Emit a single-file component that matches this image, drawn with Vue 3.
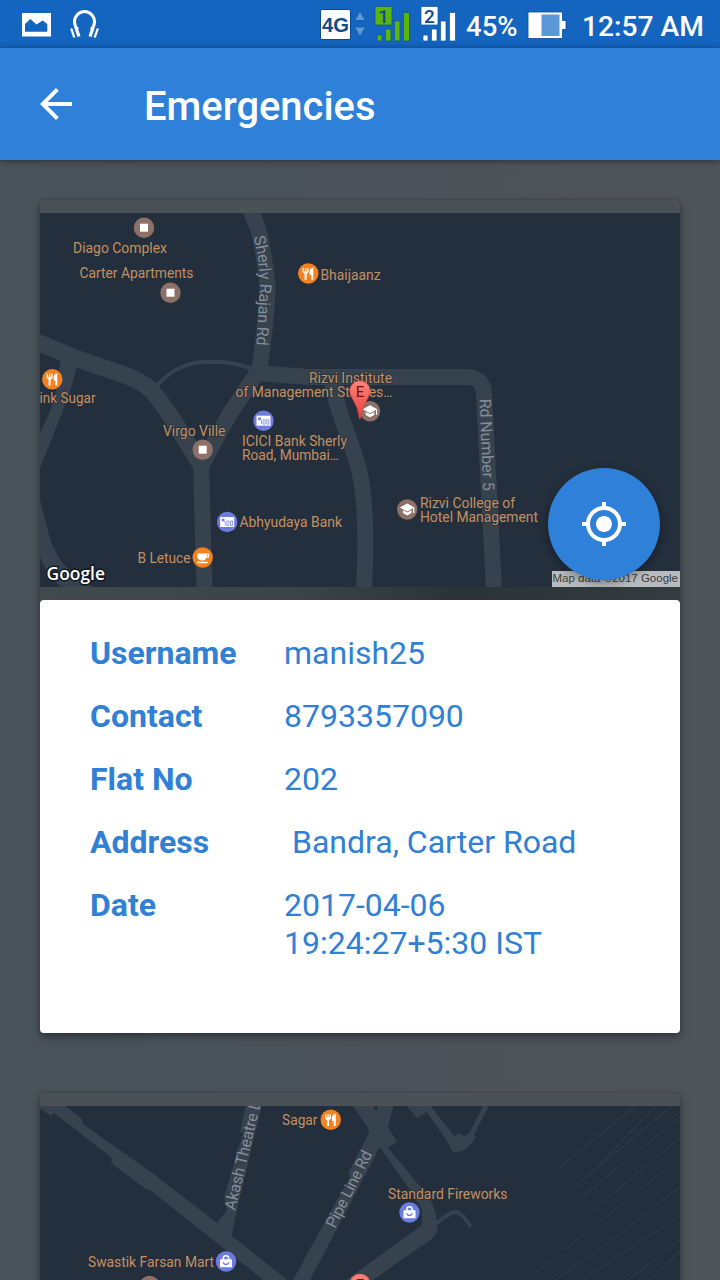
<script setup>
const details = [
  { label: 'Username', value: 'manish25' },
  { label: 'Contact', value: '8793357090' },
  { label: 'Flat No', value: '202' },
  { label: 'Address', value: ' Bandra, Carter Road' },
  { label: 'Date', value: '2017-04-06\n19:24:27+5:30 IST' },
]

const maps = [
  {
    id: 'first',
    viewBox: '40 213 640 374',
    pinY: 0,
    roads: [
      { d: 'M30 339L78 359C110 371 138 376 152 391C166 407 181 432 202 467', w: 17 },
      { d: 'M201 462L204.500 590', w: 16 },
      { d: 'M202 465L229 415L259 370', w: 16 },
      { d: 'M154 389C166 374 184 362 205 362H222C236 363 246 367 256 370', w: 4 },
      { d: 'M246 200L258 228Q264 250 267.500 287Q267 320 259 372', w: 16 },
      { d: 'M255 373L310 377H466Q483 377 484 393L494 590', w: 16 },
      { d: 'M332 380C336 415 360 455 363 493Q367 530 364 590', w: 16 },
    ],
    shapes: [
      'M61 358L77 366L71 388Q67 401 40 468V433Q53 408 56 390Z',
      'M40 500C46 522 49 540 55 550Q60 567 93 587H62Q50 580 40 557Z',
    ],
    rails: [],
    labels: [
      { t: 'Diago Complex', x: 73, y: 252.5, w: 94 },
      { t: 'Carter Apartments', x: 79.500, y: 278, w: 114 },
      { t: 'Bhaijaanz', x: 320.500, y: 279.5, w: 60 },
      { t: 'Rizvi Institute', x: 309, y: 382.5, w: 83 },
      { t: 'of Management Studies…', x: 235.500, y: 396.5, w: 157 },
      { t: 'ink Sugar', x: 39.500, y: 402.5, w: 56 },
      { t: 'Virgo Ville', x: 163, y: 436, w: 62.5 },
      { t: 'ICICI Bank Sherly', x: 242, y: 445.5, w: 105 },
      { t: 'Road, Mumbai…', x: 242, y: 459.5, w: 97 },
      { t: 'Abhyudaya Bank', x: 239.500, y: 526.5, w: 102.5 },
      { t: 'Rizvi College of', x: 420, y: 507.5, w: 95 },
      { t: 'Hotel Management', x: 420, y: 521.5, w: 118 },
      { t: 'B Letuce', x: 137.500, y: 562.7, w: 53 },
    ],
    streets: [
      { t: 'Sherly Rajan Rd', d: 'M253.500 237Q260 262 260 286L255.500 360', w: 109 },
      { t: 'Rd Number 5', d: 'M479.500 399L483.500 500', w: 92 },
    ],
    places: [
      { k: 'square', x: 144, y: 227.700 },
      { k: 'square', x: 170.5, y: 292.7 },
      { k: 'square', x: 202.7, y: 449.7 },
      { k: 'food', x: 308.3, y: 273.5 },
      { k: 'food', x: 52.3, y: 379.2 },
      { k: 'cafe', x: 202.7, y: 557.5 },
      { k: 'bank', x: 263.5, y: 420.7 },
      { k: 'bank', x: 227.2, y: 522 },
      { k: 'school', x: 370, y: 411.3 },
      { k: 'school', x: 407.2, y: 509.5 },
    ],
    credit: true,
  },
  {
    id: 'second',
    viewBox: '40 1106 640 374',
    pinY: 893,
    roads: [
      { d: 'M435 1225Q450 1211 456 1212Q461 1212 471 1227', w: 4 },
      { d: 'M470 1137L487 1104', w: 5 },
    ],
    shapes: [
      'M40 1104H63L82 1119L83 1124L155 1175L217 1223L232 1236L290 1282H266L150 1190L147 1190L111 1163L112 1158L54 1113L51 1116L40 1108Z',
      'M246 1104H262L237 1210L231 1238L215 1226L227 1210L224 1197L243 1133L240 1132Z',
      'M353 1104H372L376 1111L379 1104H394L388 1127L397 1142L387 1148L380 1147L310 1280H293L322 1227L350 1177L348 1173L369 1133L368 1128L353 1106Z',
      'M380 1147H387Q402 1164 417 1183Q439 1203 437 1232L433 1238L373 1280H346L422 1225V1210L410 1190Z',
      'M405 1104H429L455 1137L458 1133L464 1136L470 1133L476 1137Q468 1151 455 1153Q452 1152 447 1141L427 1112L417 1118Z',
    ],
    rails: [
      'M559 1168L638 1104', 'M574 1187L674 1104', 'M600 1164L657 1104',
      'M582 1197L680 1117', 'M593 1210L680 1138', 'M564 1250L680 1158',
      'M533 1275L554 1258', 'M556 1280L613 1239L680 1187', 'M583 1280L632 1247L680 1216',
      'M628 1280L680 1240', 'M650 1280L680 1251',
    ],
    labels: [
      { t: 'Sagar', x: 282, y: 1124.5, w: 35.5 },
      { t: 'Standard Fireworks', x: 388, y: 1199, w: 119.5 },
      { t: 'Swastik Farsan Mart', x: 88, y: 1267, w: 126 },
    ],
    streets: [
      { t: 'Akash Theatre Ln', d: 'M235 1211L263 1094', w: 120 },
      { t: 'Pipe Line Rd', d: 'M335 1229L376 1147', w: 84 },
    ],
    places: [
      { k: 'food', x: 330.7, y: 1119.7 },
      { k: 'shop', x: 409.5, y: 1212.5 },
      { k: 'shop', x: 226, y: 1261.5 },
      { k: 'square', x: 149.5, y: 1286 },
    ],
    credit: false,
  },
]
</script>

<template>
  <div class="screen">
    <div class="status">
      <svg class="notes" width="110" height="48" viewBox="0 0 110 48">
        <path fill="#fff" fill-rule="evenodd" d="M22 13H51V36.500H22ZM25 24V31.700H47.300V24L42.700 20.500L36.500 24.500L30.300 19Z" />
        <g fill="none" stroke="#fff">
          <path stroke-width="3" d="M78 29.500A10 10.200 0 1 1 91 29.500" />
          <path stroke-width="2.300" d="M71.200 28.500L74.300 37.500M97.800 28.500L94.700 37.500" />
          <path stroke-width="3.200" d="M75.700 27L79 36.500M93.300 27L90 36.500" />
        </g>
      </svg>
      <svg class="signals" width="147" height="48" viewBox="320 0 147 48">
        <rect x="320.500" y="9.500" width="30" height="30" rx="1.500" fill="#fff" stroke="#0b4a94" />
        <text x="322" y="32" textLength="27" lengthAdjust="spacingAndGlyphs" class="net">4G</text>
        <path fill="#5d9ad9" stroke="#0b4f9f" stroke-width=".7" d="M360 11.500L365.500 20.500H354.500ZM360 36.500L365.500 27H354.500Z" />
        <g fill="#5cb50b" stroke="#0b4f9f" stroke-width=".7">
          <rect x="375" y="6.500" width="17" height="18.500" rx="1" />
          <rect x="377" y="35" width="5" height="6" rx="1" />
          <rect x="385.500" y="29" width="5.500" height="12" rx="1" />
          <rect x="394.500" y="21" width="5.500" height="20" rx="1" />
          <rect x="403.500" y="12.500" width="6" height="28.500" rx="1" />
        </g>
        <g fill="#fff" stroke="#0b4f9f" stroke-width=".7">
          <rect x="421" y="6.500" width="17" height="18.500" rx="1" />
          <rect x="423" y="35" width="5" height="6" rx="1" />
          <rect x="431.500" y="29" width="5.500" height="12" rx="1" />
          <rect x="440.500" y="21" width="5.500" height="20" rx="1" />
          <rect x="449.500" y="12.500" width="6" height="28.500" rx="1" />
        </g>
        <text x="383.500" y="22.500" class="sim">1</text>
        <text x="429.500" y="22.500" class="sim">2</text>
      </svg>
      <span class="pct">45%</span>
      <svg class="battery" width="40" height="48" viewBox="527 0 40 48">
        <path fill="#fff" stroke="#0b4a94" stroke-width=".8" d="M528 12H562.500V20.500H566V29.500H562.500V38.500H528Z" />
        <rect x="541.500" y="14.500" width="18" height="21.500" fill="#5c98d8" />
      </svg>
      <span class="clock">12:57 AM</span>
    </div>

    <header class="bar">
      <svg width="48" height="48" viewBox="0 0 24 24">
        <path fill="#fff" d="M20 11H7.830l5.590-5.590L12 4l-8 8 8 8 1.410-1.410L7.830 13H20v-2z" />
      </svg>
      <h1>Emergencies</h1>
    </header>

    <main class="list">
      <article v-for="m in maps" :key="m.id" class="card">
        <div class="media">
          <svg class="map" width="640" height="374" :viewBox="m.viewBox">
            <defs>
              <linearGradient :id="'pin-' + m.id" x1="0" y1="0" x2="0" y2="1">
                <stop offset="0" stop-color="#fb857d" />
                <stop offset="1" stop-color="#ee3a36" />
              </linearGradient>
              <path v-for="(s, i) in m.streets" :id="m.id + '-street-' + i" :key="s.t" :d="s.d" />
            </defs>
            <path v-for="r in m.rails" :key="r" :d="r" class="rail" />
            <path v-for="s in m.shapes" :key="s" :d="s" class="block" />
            <path v-for="r in m.roads" :key="r.d" :d="r.d" :stroke-width="r.w" class="road" />
            <text v-for="(s, i) in m.streets" :key="s.t" class="street" :textLength="s.w">
              <textPath :href="'#' + m.id + '-street-' + i" :textLength="s.w">{{ s.t }}</textPath>
            </text>
            <text v-for="l in m.labels" :key="l.t" :x="l.x" :y="l.y" :textLength="l.w" lengthAdjust="spacingAndGlyphs" class="label">{{ l.t }}</text>
            <g v-for="(p, i) in m.places" :key="i" :transform="`translate(${p.x} ${p.y})`">
              <circle r="10.200" :class="['dot', p.k]" />
              <rect v-if="p.k === 'square'" x="-4" y="-4" width="8" height="8" fill="#fff" />
              <g v-else-if="p.k === 'food'" fill="none" stroke="#fff">
                <path stroke-width="1.300" d="M-5 -5.500V-1.500M-2.700 -5.500V-1M-.400 -5.500V-1.500" />
                <path stroke-width="2" d="M-5 -2Q-2.700 1 -.400 -2M-2.700 -.500V6.200" />
                <path fill="#fff" stroke="none" d="M5 -6V6.200H3V1.200H1.300V-2.500Q1.800 -5.500 5 -6Z" />
              </g>
              <g v-else-if="p.k === 'cafe'">
                <path fill="#fff" d="M-5.500 -4H6.500V0H4Q2.500 3 0 3H-1.500Q-5 2.500 -5.500 -2ZM-5.500 4.300H5V5.800H-5.500Z" />
                <path fill="#f58220" d="M4.200 -2.800H5.400V-1.200H4.200Z" />
              </g>
              <g v-else-if="p.k === 'bank'">
                <rect x="-7" y="-5" width="14" height="10" fill="#fff" />
                <circle cx="-4" cy="-2" r="1.500" fill="#6c7be0" />
                <path fill="none" stroke="#8d99e6" stroke-width=".900" d="M-2 -1V3.500M-.300 -1H1.700V3.500H-.300ZM3.300 -1H5.300V3.500H3.300Z" />
              </g>
              <g v-else-if="p.k === 'school'" fill="#fff">
                <path d="M0 -6L7.300 -2L0 2L-7.300 -2ZM-4.300 .600L0 3L4.300 .600V3.600L0 6L-4.300 3.600ZM6 -1.500H7.200V3.500H6Z" />
              </g>
              <g v-else>
                <rect x="-6" y="-2.200" width="12" height="8" rx=".600" fill="#fff" />
                <path fill="none" stroke="#fff" stroke-width="1.500" d="M-2.700 -1.500V-3Q-2.700 -5.700 0 -5.700T2.700 -3V-1.500" />
                <path fill="none" stroke="#6c7be0" stroke-width="1.400" d="M-3 .800Q0 5.300 3 .800" />
              </g>
            </g>
            <g :transform="`translate(0 ${m.pinY})`">
              <path :fill="'url(#pin-' + m.id + ')'" stroke="#d84a45" stroke-width=".600" d="M360 381C354 381 349.800 385.500 349.800 391C349.800 398 358.500 404 359.200 418.500H360.800C361.500 404 370.200 398 370.200 391C370.200 385.500 366 381 360 381Z" />
              <text x="360" y="397" class="pin-letter">E</text>
            </g>
            <text v-if="m.credit" x="46.500" y="580" textLength="58.500" lengthAdjust="spacingAndGlyphs" class="google">Google</text>
          </svg>
          <span v-if="m.credit" class="credit">Map data ©2017 Google</span>
          <button class="fab" v-if="m.credit" aria-label="Locate">
            <svg width="48" height="48" viewBox="0 0 24 24">
              <path fill="#fff" d="M12 8c-2.210 0-4 1.790-4 4s1.790 4 4 4 4-1.790 4-4-1.790-4-4-4zm8.940 3c-.46-4.170-3.770-7.480-7.940-7.940V1h-2v2.060C6.830 3.520 3.520 6.830 3.060 11H1v2h2.060c.46 4.170 3.770 7.480 7.940 7.940V23h2v-2.060c4.170-.46 7.480-3.770 7.940-7.940H23v-2h-2.060zM12 19c-3.870 0-7-3.130-7-7s3.130-7 7-7 7 3.130 7 7-3.130 7-7 7z" />
            </svg>
          </button>
        </div>
        <dl class="details">
          <div v-for="d in details" :key="d.label" class="row">
            <dt>{{ d.label }}</dt>
            <dd>{{ d.value }}</dd>
          </div>
        </dl>
      </article>
    </main>
  </div>
</template>

<style>
body {
  margin: 0;
  overflow: hidden;
}
</style>

<style scoped>
.screen {
  width: 720px;
  height: 1280px;
  overflow: hidden;
  display: flex;
  flex-direction: column;
  font-family: Roboto, "Liberation Sans", sans-serif;
  background: linear-gradient(90deg, #49535a, #4c535a 55%, #4e555a);
}
.status {
  flex: none;
  height: 48px;
  display: grid;
  grid-template-columns: 320px 146px 61px 55px 1fr;
  background: #1465c0;
  color: #fff;
  font-weight: 500;
  font-size: 28px;
  line-height: 54px;
  white-space: nowrap;
}
.status svg {
  display: block;
}
.pct {
  font-size: 27.500px;
}
.clock {
  font-size: 28.200px;
}
.net {
  font: bold 20px "Liberation Sans", sans-serif;
  fill: #124a8c;
}
.sim {
  font: 500 19px Roboto, sans-serif;
  fill: #124a8c;
  text-anchor: middle;
}
.bar {
  flex: none;
  height: 112px;
  box-sizing: border-box;
  padding-left: 32px;
  display: flex;
  align-items: center;
  gap: 64px;
  background: #2f80d8;
  box-shadow: 0 1px 7px rgba(0, 0, 0, .45);
  position: relative;
}
.bar h1 {
  margin: 6px 0 0;
  font-size: 39.900px;
  font-weight: 500;
  line-height: 48px;
  color: #fff;
}
.list {
  display: flex;
  flex-direction: column;
  gap: 60px;
  padding: 40px;
}
.card {
  flex: none;
  height: 833px;
  border-radius: 4px;
  display: flex;
  flex-direction: column;
  background: linear-gradient(90deg, #404a4d, #3b4548 40%, #2a3337 65%, #343c3f) 0 387px / 100% 40px no-repeat, #4b5257;
  box-shadow: 0 4px 10px rgba(0, 0, 0, .36), 0 0 3px rgba(0, 0, 0, .2);
}
.media {
  flex: none;
  height: 374px;
  padding: 13px 0;
  position: relative;
}
.map {
  display: block;
  background: #232f3c;
}
.road {
  fill: none;
  stroke: #36424e;
  stroke-linejoin: round;
}
.block {
  fill: #36424e;
}
.rail {
  fill: none;
  stroke: #2d3946;
  stroke-width: 1.3;
}
.label {
  font-size: 14px;
  fill: #c68f62;
  stroke: #232f3c;
  stroke-width: 1.5px;
  paint-order: stroke;
}
.street {
  font-size: 16px;
  fill: #858d98;
}
.dot.square, .dot.school {
  fill: #8d7066;
}
.dot.food, .dot.cafe {
  fill: #f58220;
}
.dot.bank, .dot.shop {
  fill: #6c7be0;
}
.pin-letter {
  font-size: 15px;
  fill: #6f1512;
  text-anchor: middle;
}
.google {
  font: 600 18.500px "Open Sans", Lato, sans-serif;
  fill: #fff;
  stroke: #111820;
  stroke-width: 3px;
  stroke-linejoin: round;
  paint-order: stroke;
}
.credit {
  position: absolute;
  right: 0;
  bottom: 13px;
  width: 128px;
  height: 16px;
  box-sizing: border-box;
  padding-right: 2px;
  background: #b8bcbf;
  color: #3b3d40;
  font: 11.500px/15px "Liberation Sans", sans-serif;
  text-align: right;
  white-space: nowrap;
}
.fab {
  position: absolute;
  right: 20px;
  bottom: 20px;
  width: 112px;
  height: 112px;
  border: 0;
  padding: 0;
  border-radius: 50%;
  display: grid;
  place-items: center;
  background: #2f80d8;
  box-shadow: 0 3px 10px rgba(0, 0, 0, .35);
}
.details {
  flex: 1;
  margin: 0;
  padding: 34px 50px 0;
  border-radius: 4px;
  display: flex;
  flex-direction: column;
  gap: 25px;
  background: #fff;
  color: #3080d5;
  font-size: 32px;
  line-height: 38px;
}
.row {
  display: grid;
  grid-template-columns: 194px 1fr;
}
dt {
  font-weight: 700;
}
dd {
  margin: 0;
  white-space: pre;
}
</style>
